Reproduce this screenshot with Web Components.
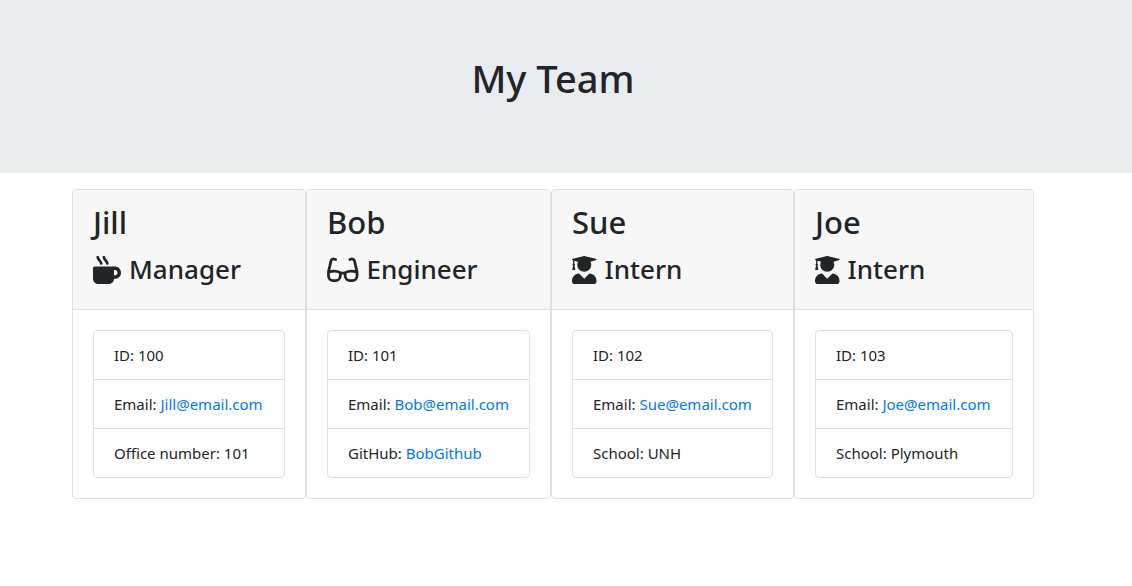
<!DOCTYPE html>
<html lang="en">
<head>
<meta charset="utf-8">
<meta name="viewport" content="width=device-width, initial-scale=1">
<title>My Team</title>
<style>
body { margin: 0; background: #fff; color: #212529; font: 400 15px/24px "Noto Sans", "Open Sans", sans-serif; }
</style>
</head>
<body>
<team-banner>My Team</team-banner>
<team-grid>
  <team-card name="Jill" role-name="Manager" icon="mug">
    <team-fact>ID: 100</team-fact>
    <team-fact>Email: <team-link to="mailto:Jill@email.com">Jill@email.com</team-link></team-fact>
    <team-fact>Office number: 101</team-fact>
  </team-card>
  <team-card name="Bob" role-name="Engineer" icon="glasses">
    <team-fact>ID: 101</team-fact>
    <team-fact>Email: <team-link to="mailto:Bob@email.com">Bob@email.com</team-link></team-fact>
    <team-fact>GitHub: <team-link to="https://github.com/BobGithub">BobGithub</team-link></team-fact>
  </team-card>
  <team-card name="Sue" role-name="Intern" icon="graduate">
    <team-fact>ID: 102</team-fact>
    <team-fact>Email: <team-link to="mailto:Sue@email.com">Sue@email.com</team-link></team-fact>
    <team-fact>School: UNH</team-fact>
  </team-card>
  <team-card name="Joe" role-name="Intern" icon="graduate">
    <team-fact>ID: 103</team-fact>
    <team-fact>Email: <team-link to="mailto:Joe@email.com">Joe@email.com</team-link></team-fact>
    <team-fact>School: Plymouth</team-fact>
  </team-card>
</team-grid>
<script>
const ICONS = {
  mug: {
    width: 512,
    fill: 'M32 192c-17.7 0-32 14.3-32 32V416c0 53 43 96 96 96H288c53 0 96-43 96-96h16c61.9 0 112-50.1 112-112s-50.1-112-112-112H32zm352 64h16c26.5 0 48 21.5 48 48s-21.5 48-48 48H384V256z',
    stroke: 'M86 22C92 72 142 88 150 136M198 22C204 72 254 88 262 136'
  },
  glasses: {
    width: 576,
    fill: '',
    stroke: 'M158 64L142 58C112 47 80 60 73 90L27 290V360C27 412 64 450 114 450H156C204 450 240 414 243 368L247 306C176 272 96 272 27 300M418 64L434 58C464 47 496 60 503 90L549 290V360C549 412 512 450 462 450H420C372 450 336 414 333 368L329 306C400 272 480 272 549 300M247 312H329'
  },
  graduate: {
    width: 448,
    fill: 'M319.4 320.6L224 416l-95.4-95.4C57.1 323.7 0 382.2 0 454.4v9.6c0 26.5 21.5 48 48 48h352c26.5 0 48-21.5 48-48v-9.6c0-72.2-57.1-130.7-128.6-133.8zM13.6 79.8l6.4 1.5v58.4c-7 4.2-12 11.5-12 20.3 0 8.4 4.6 15.4 11.1 19.7L3.5 242c-1.7 6.9 2.1 14 7.6 14h41.8c5.5 0 9.3-7.1 7.6-14l-15.6-62.3C51.4 175.4 56 168.4 56 160c0-8.8-5-16.1-12-20.3V87.1l66 15.9c-8.6 17.2-14 36.4-14 57 0 70.7 57.3 128 128 128s128-57.3 128-128c0-20.6-5.3-39.8-14-57l96.3-23.2c18.2-4.4 18.2-27.1 0-31.5l-190.4-46c-13-3.1-26.7-3.1-39.7 0L13.6 48.2c-18.1 4.4-18.1 27.2 0 31.6z',
    stroke: ''
  }
};

function define(name, render) {
  customElements.define(name, class extends HTMLElement {
    constructor() {
      super();
      this.attachShadow({ mode: 'open' });
    }
    connectedCallback() {
      this.shadowRoot.innerHTML = render(this);
    }
  });
}

define('team-banner', () => `
  <style>
    :host { display: block; background: #e9ecef; padding: 54px 58px 71px 32px; margin-bottom: 16px; }
    h1 { margin: 0; font-size: 38px; line-height: 48px; font-weight: 500; text-align: center; }
  </style>
  <h1><slot></slot></h1>`);

define('team-grid', () => `
  <style>
    :host { display: block; padding-right: 26px; }
    main { display: grid; grid-template-columns: 234fr 245fr 243fr 240fr; max-width: 962px; margin: 0 auto; }
    @media (max-width: 980px) { main { grid-template-columns: repeat(auto-fit, minmax(245px, 1fr)); } }
  </style>
  <main><slot></slot></main>`);

define('team-card', el => {
  const icon = ICONS[el.getAttribute('icon')];
  return `
  <style>
    :host { display: block; }
    article { border: 1px solid #dfdfdf; border-radius: 4px; overflow: hidden; }
    header { background: #f7f7f7; border-bottom: 1px solid #dfdfdf; padding: 12px 20px 20px; }
    h2, h3 { margin: 0; font-weight: 500; }
    h2 { font-size: 31px; line-height: 40px; margin-bottom: 8px; }
    h3 { display: flex; align-items: center; gap: 8px; font-size: 26px; line-height: 39px; }
    svg { height: 28px; flex: none; fill: currentColor; }
    .line { fill: none; stroke: currentColor; stroke-width: 50; stroke-linecap: round; stroke-linejoin: round; }
    .body { padding: 20px; }
    .facts { border: 1px solid #dfdfdf; border-radius: 4px; }
  </style>
  <article>
    <header>
      <h2>${el.getAttribute('name')}</h2>
      <h3><svg viewBox="0 0 ${icon.width} 512" aria-hidden="true"><path d="${icon.fill}"/><path class="line" d="${icon.stroke}"/></svg><span>${el.getAttribute('role-name')}</span></h3>
    </header>
    <div class="body"><div class="facts" role="list"><slot></slot></div></div>
  </article>`;
});

define('team-fact', el => {
  el.setAttribute('role', 'listitem');
  return `
  <style>
    :host { display: block; padding: 12px 20px; border-bottom: 1px solid #dfdfdf; white-space: nowrap; }
    :host(:last-of-type) { border-bottom: 0; }
  </style>
  <slot></slot>`;
});

define('team-link', el => `
  <style>
    :host { display: inline; }
    a { color: #0078f0; text-decoration: none; }
    a:hover { text-decoration: underline; }
  </style>
  <a href="${el.getAttribute('to')}"><slot></slot></a>`);
</script>
</body>
</html>
